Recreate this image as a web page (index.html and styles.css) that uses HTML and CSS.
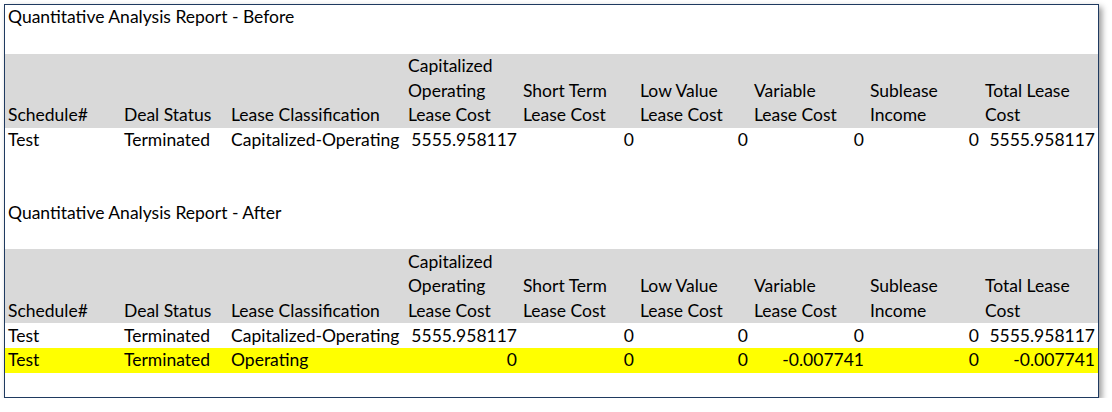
FILE: index.html
```html
<!DOCTYPE html>
<html>
<head>
<meta charset="utf-8">
<link rel="stylesheet" href="styles.css">
</head>
<body>
<div class="frame">
<table class="sheet">
<colgroup>
<col class="c-a"><col class="c-b"><col class="c-c"><col class="c-d"><col class="c-e"><col class="c-f"><col class="c-g"><col class="c-h"><col class="c-i">
</colgroup>
<tbody>
<tr class="r-title"><td colspan="9">Quantitative Analysis Report - Before</td></tr>
<tr class="r-blank"><td colspan="9"></td></tr>
<tr class="r-head">
<td>Schedule#</td><td>Deal Status</td><td>Lease Classification</td><td>Capitalized<br>Operating<br>Lease Cost</td><td>Short Term<br>Lease Cost</td><td>Low Value<br>Lease Cost</td><td>Variable<br>Lease Cost</td><td>Sublease<br>Income</td><td>Total Lease<br>Cost</td>
</tr>
<tr class="r-data">
<td>Test</td><td>Terminated</td><td>Capitalized-Operating</td><td class="num">5555.958117</td><td class="num">0</td><td class="num">0</td><td class="num">0</td><td class="num">0</td><td class="num">5555.958117</td>
</tr>
<tr class="r-blank"><td colspan="9"></td></tr>
<tr class="r-blank"><td colspan="9"></td></tr>
<tr class="r-title"><td colspan="9">Quantitative Analysis Report - After</td></tr>
<tr class="r-blank"><td colspan="9"></td></tr>
<tr class="r-head">
<td>Schedule#</td><td>Deal Status</td><td>Lease Classification</td><td>Capitalized<br>Operating<br>Lease Cost</td><td>Short Term<br>Lease Cost</td><td>Low Value<br>Lease Cost</td><td>Variable<br>Lease Cost</td><td>Sublease<br>Income</td><td>Total Lease<br>Cost</td>
</tr>
<tr class="r-data">
<td>Test</td><td>Terminated</td><td>Capitalized-Operating</td><td class="num">5555.958117</td><td class="num">0</td><td class="num">0</td><td class="num">0</td><td class="num">0</td><td class="num">5555.958117</td>
</tr>
<tr class="r-data r-hl">
<td>Test</td><td>Terminated</td><td>Operating</td><td class="num">0</td><td class="num">0</td><td class="num">0</td><td class="num">-0.007741</td><td class="num">0</td><td class="num">-0.007741</td>
</tr>
<tr class="r-blank"><td colspan="9"></td></tr>
</tbody>
</table>
</div>
</body>
</html>
```
FILE: styles.css
```css
html, body {
  margin: 0;
  padding: 0;
  background: #ffffff;
}
body {
  padding: 4px 0 0 4px;
}
.frame {
  width: 1093px;
  border: 1px solid #1f3a60;
  background: #ffffff;
  box-shadow: 3px 3px 6px rgba(0, 0, 0, 0.4);
}
.sheet {
  border-collapse: collapse;
  border-spacing: 0;
  table-layout: fixed;
  width: 1093px;
  font-family: Lato, "Liberation Sans", sans-serif;
  font-size: 17.5px;
  color: #000000;
}
.c-a { width: 116px; }
.c-b { width: 107px; }
.c-c { width: 177px; }
.c-d { width: 115px; }
.c-e { width: 117px; }
.c-f { width: 114px; }
.c-g { width: 116px; }
.c-h { width: 115px; }
.c-i { width: 116px; }
.sheet td {
  padding: 0 3px 0 3px;
  vertical-align: bottom;
  line-height: 24.5px;
  white-space: nowrap;
  overflow: hidden;
}
.r-title td, .r-blank td {
  height: 24px;
}
.r-head td {
  height: 74px;
  background: #d9d9d9;
}
.r-data td {
  height: 25px;
}
.r-hl td {
  background: #ffff00;
  height: 24px;
}
.sheet td.num {
  text-align: right;
}
```
